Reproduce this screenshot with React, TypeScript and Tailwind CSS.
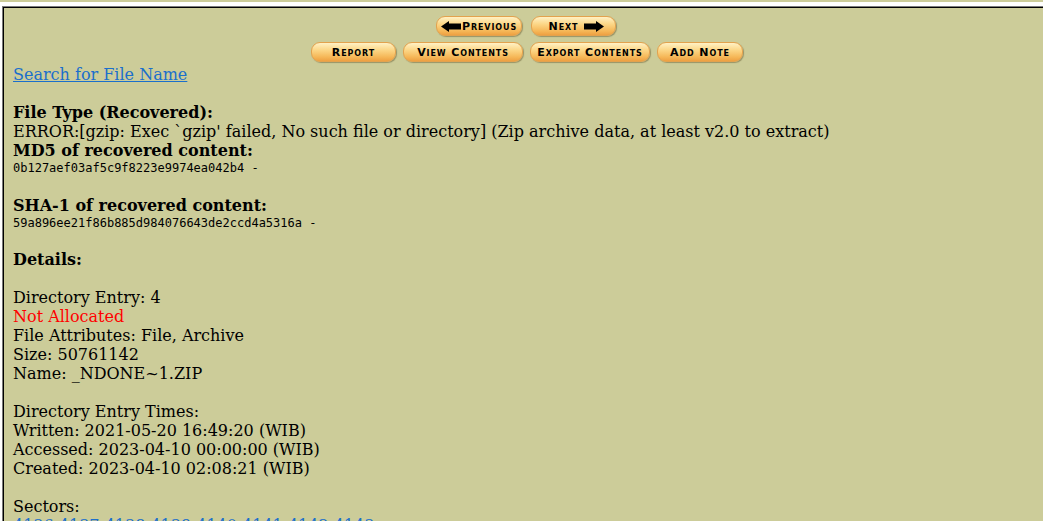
import React from 'react';

const serif = { fontFamily: '"DejaVu Serif", serif' };
const mono = { fontFamily: '"DejaVu Sans Mono", monospace' };
const sans = { fontFamily: '"DejaVu Sans", sans-serif' };

const btnCls =
  'h-[20px] flex items-center justify-center rounded-[9px] border border-[#e3a24e] bg-[linear-gradient(to_bottom,#fff1c4_0%,#fcd686_40%,#f5b555_80%,#eea042_100%)] shadow-[1px_1px_1px_rgba(90,80,40,0.45)] text-black';
const labelCls = 'text-[11px] font-bold [font-variant:small-caps] tracking-[0.9px] leading-none';

function Arrow({ dir }: { dir: 'left' | 'right' }) {
  return (
    <svg width="20" height="11" viewBox="0 0 20 11" className="shrink-0">
      {dir === 'left' ? (
        <path d="M0 5.5 L8 0 L8 2.5 L20 2.5 L20 8.5 L8 8.5 L8 11 Z" fill="#000" />
      ) : (
        <path d="M20 5.5 L12 0 L12 2.5 L0 2.5 L0 8.5 L12 8.5 L12 11 Z" fill="#000" />
      )}
    </svg>
  );
}

function Btn({ w, children }: { w: string; children: React.ReactNode }) {
  return (
    <a href="#" className={`${w} ${btnCls}`} style={sans}>
      <span className={labelCls}>{children}</span>
    </a>
  );
}

export default function App() {
  const sectors = ['4136', '4137', '4138', '4139', '4140', '4141', '4142', '4143'];
  return (
    <div className="min-h-screen bg-[#cccc99] pt-[2px]">
      <div className="bg-white pt-[4px] pl-[2px] min-h-[519px]">
        <div className="border-t border-l border-[#7a7a7a] min-h-[515px]">
          <div className="border-t border-l border-black bg-[#cccc99] min-h-[514px] pt-[8px] pl-[9px] text-[16px] text-black" style={serif}>
            <div className="flex justify-center gap-[9px] pr-[4px]">
              <a href="#" className={`w-[86px] gap-[1px] ${btnCls}`} style={sans}>
                <Arrow dir="left" />
                <span className={labelCls}>Previous</span>
              </a>
              <a href="#" className={`w-[85px] gap-[6px] pl-[6px] ${btnCls}`} style={sans}>
                <span className={labelCls}>Next</span>
                <Arrow dir="right" />
              </a>
            </div>
            <div className="flex justify-center gap-[7px] mt-[6px] pr-[2px]">
              <Btn w="w-[85px]">Report</Btn>
              <Btn w="w-[120px]">View Contents</Btn>
              <Btn w="w-[120px]">Export Contents</Btn>
              <Btn w="w-[86px]">Add Note</Btn>
            </div>

            <div className="mt-[3px] leading-[19px]">
              <a href="#" className="text-[#1b6fcc] underline">Search for File Name</a>
              <div className="h-[19px]" />
              <div className="font-bold">File Type (Recovered):</div>
              <div>ERROR:[gzip: Exec `gzip' failed, No such file or directory] (Zip archive data, at least v2.0 to extract)</div>
              <div className="font-bold">MD5 of recovered content:</div>
              <div className="text-[12px] leading-[17px]" style={mono}>0b127aef03af5c9f8223e9974ea042b4 -</div>
              <div className="h-[19px]" />
              <div className="font-bold">SHA-1 of recovered content:</div>
              <div className="text-[12px] leading-[16px]" style={mono}>59a896ee21f86b885d984076643de2ccd4a5316a -</div>
              <div className="h-[19px]" />
              <div className="font-bold">Details:</div>
              <div className="h-[19px]" />
              <div>Directory Entry: 4</div>
              <div className="text-[#ff0000]">Not Allocated</div>
              <div>File Attributes: File, Archive</div>
              <div>Size: 50761142</div>
              <div>Name: _NDONE~1.ZIP</div>
              <div className="h-[19px]" />
              <div>Directory Entry Times:</div>
              <div>Written: 2021-05-20 16:49:20 (WIB)</div>
              <div>Accessed: 2023-04-10 00:00:00 (WIB)</div>
              <div>Created: 2023-04-10 02:08:21 (WIB)</div>
              <div className="h-[19px]" />
              <div>Sectors:</div>
              <div>
                {sectors.map((s, i) => (
                  <React.Fragment key={s}>
                    <a href="#" className="text-[#1b6fcc] underline">{s}</a>
                    {i < sectors.length - 1 ? ' ' : ''}
                  </React.Fragment>
                ))}
              </div>
            </div>
          </div>
        </div>
      </div>
    </div>
  );
}
